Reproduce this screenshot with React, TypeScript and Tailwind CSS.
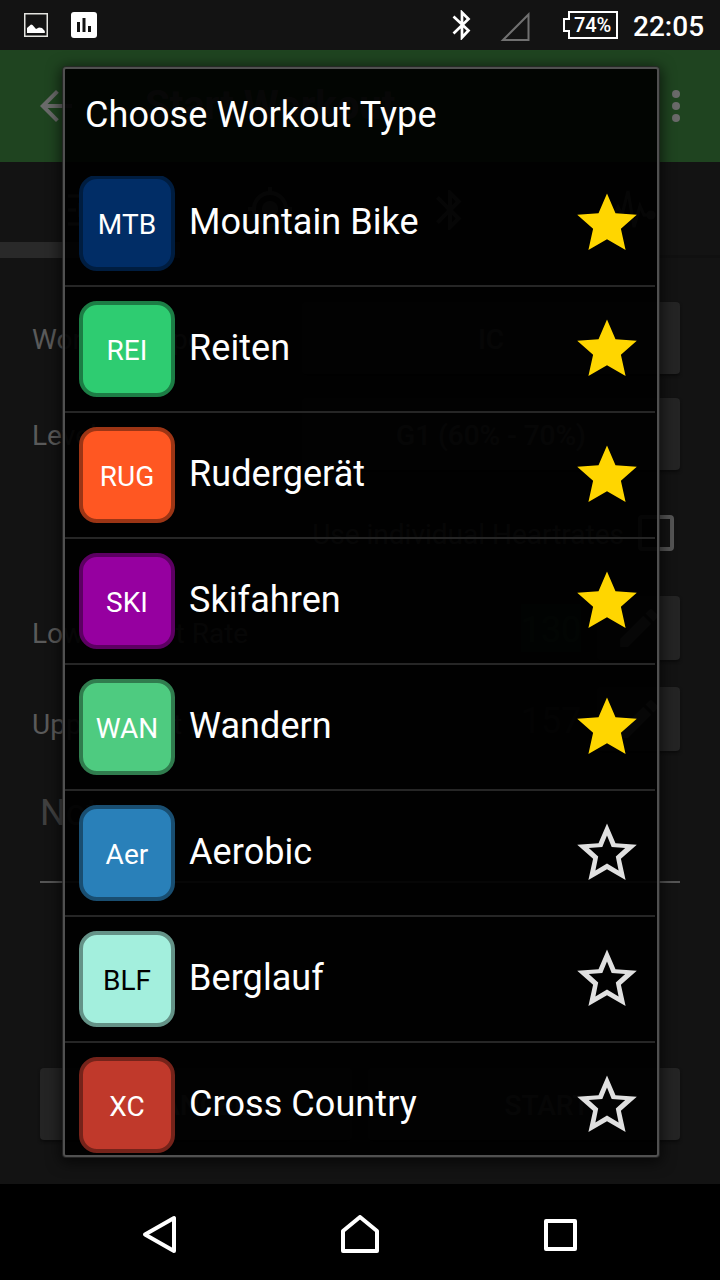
import React from "react";

type Workout = { code: string; name: string; tile: string; favorite: boolean };

const workouts: Workout[] = [
  { code: "MTB", name: "Mountain Bike", tile: "bg-[#012d66] border-[#001d40] text-white", favorite: true },
  { code: "REI", name: "Reiten", tile: "bg-[#2ecc71] border-[#1c7d45] text-white", favorite: true },
  { code: "RUG", name: "Rudergerät", tile: "bg-[#ff5722] border-[#9c3515] text-white", favorite: true },
  { code: "SKI", name: "Skifahren", tile: "bg-[#9600a0] border-[#5c0062] text-white", favorite: true },
  { code: "WAN", name: "Wandern", tile: "bg-[#4ecb80] border-[#307c4e] text-white", favorite: true },
  { code: "Aer", name: "Aerobic", tile: "bg-[#2980b9] border-[#194e71] text-white", favorite: false },
  { code: "BLF", name: "Berglauf", tile: "bg-[#a3efdd] border-[#649287] text-black", favorite: false },
  { code: "XC", name: "Cross Country", tile: "bg-[#c0392b] border-[#75231a] text-white", favorite: false },
];

function Star({ filled }: { filled: boolean }) {
  return (
    <svg className="mb-[2px] h-[60px] w-[62px] shrink-0" viewBox="0 0 62 60">
      {filled ? (
        <path d="M31 1.500 39.500 21.200 60.800 22.700 44.900 36.700 49.600 58 31 47.200 12.400 58 17.100 36.700 1.200 22.700 22.500 21.200Z" fill="#ffd600" />
      ) : (
        <path
          d="M31 1.500 39.500 21.200 60.800 22.700 44.900 36.700 49.600 58 31 47.200 12.400 58 17.100 36.700 1.200 22.700 22.500 21.200ZM31 13.500 26.300 25 12.800 26 22.200 34.500 19.400 48.500 31 41.600 42.600 48.500 39.800 34.500 49.200 26 35.700 25Z"
          fill="#e0e0e0"
          fillRule="evenodd"
        />
      )}
    </svg>
  );
}

function Bluetooth({ className }: { className: string }) {
  return (
    <svg className={className} viewBox="5 2 14 20" fill="currentColor">
      <path d="M17.71 7.71 12 2h-1v7.59L6.41 5 5 6.41 10.59 12 5 17.59 6.41 19 11 14.41V22h1l5.71-5.71-4.3-4.29 4.3-4.29zM13 5.83l1.88 1.88L13 9.59V5.83zm1.88 10.46L13 18.17v-3.76l1.88 1.88z" />
    </svg>
  );
}

function StatusBar() {
  return (
    <div className="flex h-[50px] shrink-0 items-center bg-[#131313] text-white">
      <svg className="ml-6 h-6 w-6" viewBox="0 0 24 24">
        <rect x=".75" y=".75" width="22.5" height="22.5" fill="none" stroke="#e4e4e0" strokeWidth="1.5" />
        <path d="M3 20v-5l4-3.500 1.500.5L12 16l3-1.500 3 .5 2.800 3V20Z" fill="#fff" />
      </svg>
      <svg className="ml-[23px] h-[26px] w-[26px]" viewBox="0 0 26 26">
        <rect width="26" height="26" rx="3" fill="#fff" />
        <path d="M6 10h3v10H6zM11.500 6h3v14h-3zM17 14h3v6h-3z" fill="#131313" />
      </svg>
      <div className="grow" />
      <svg className="h-[30px] w-[19px]" viewBox="0 0 19 30">
        <path d="m1.500 6.500 15 14-6.500 7V2.500l6.500 6.500-15 14.500" fill="none" stroke="#fff" strokeWidth="2.700" />
      </svg>
      <svg className="ml-[29px] mt-[2px] h-[31px] w-[31px]" viewBox="0 0 31 31">
        <path d="M3 29 28.500 3.500V29Z" fill="none" stroke="#707070" strokeWidth="2" />
      </svg>
      <div className="relative ml-[32px] h-[28px] w-[55px]">
        <svg className="h-[28px] w-[55px]" viewBox="0 0 55 28">
          <path d="M6 1h48v26H6v-7H1V8h5Z" fill="none" stroke="#fff" strokeWidth="2" />
        </svg>
        <span className="absolute left-[11px] top-0 text-[20px] font-medium leading-[28px] tracking-[-0.1px]">74%</span>
      </div>
      <span className="ml-[15px] mr-4 mt-1 w-[71px] whitespace-nowrap text-[28px] font-medium leading-8">22:05</span>
    </div>
  );
}

function Pencil() {
  return (
    <svg className="h-[42px] w-[42px]" viewBox="2 2 20 20" fill="#606060">
      <path d="M3 17.250V21h3.750L17.810 9.940l-3.750-3.750L3 17.250zM20.710 7.040a1 1 0 0 0 0-1.410l-2.340-2.340a1 1 0 0 0-1.410 0l-1.830 1.830 3.750 3.750 1.830-1.830z" />
    </svg>
  );
}

function WorkoutForm() {
  const button = "flex items-center justify-center rounded bg-[#242424] font-medium shadow-[0_2px_3px_#0c0c0c]";
  return (
    <div className="flex h-[1134px] shrink-0 flex-col bg-[#131313] text-[28px] text-[#5a5a5a]">
      <header className="flex h-28 shrink-0 items-center bg-[#1f4420] pl-10 pr-[38px] text-[#6a6a6a]">
        <svg className="h-8 w-8" viewBox="4 4 16 16" fill="currentColor">
          <path d="M20 11H7.830l5.590-5.590L12 4l-8 8 8 8 1.410-1.410L7.830 13H20v-2z" />
        </svg>
        <h1 className="ml-[73px] grow text-[40px] font-bold">Start Workout</h1>
        <svg className="h-8 w-3" viewBox="0 0 12 32" fill="currentColor">
          <circle cx="6" cy="4" r="4" />
          <circle cx="6" cy="16" r="4" />
          <circle cx="6" cy="28" r="4" />
        </svg>
      </header>
      <nav className="grid h-24 shrink-0 grid-cols-4 border-b-[3px] border-[#101010]">
        <div className="-mb-[3px] flex items-center justify-center border-b-[16px] border-[#292929]">
          <svg className="mt-4 h-8 w-11" viewBox="0 0 44 32" stroke="currentColor" strokeWidth="3">
            <path d="M0 2h44M0 16h8M16 16h28M0 30h44M12 9v14" />
          </svg>
        </div>
        <div className="flex items-center justify-center">
          <svg className="h-11 w-11" viewBox="1 1 22 22" fill="none" stroke="currentColor" strokeWidth="2">
            <circle cx="12" cy="12" r="8" /><circle cx="12" cy="12" r="4" fill="currentColor" stroke="none" />
            <path d="M12 1v3M12 20v3M1 12h3M20 12h3" />
          </svg>
        </div>
        <div className="flex items-center justify-center pt-[2px]"><Bluetooth className="h-10 w-7" /></div>
        <div className="flex items-center justify-center">
          <svg className="h-10 w-[52px]" viewBox="0 0 52 40" fill="none" stroke="currentColor" strokeWidth="3">
            <path d="M0 26h10l4-8 4 8 6-24 6 36 6-21 4 9h5" /><circle cx="47" cy="26" r="3" fill="currentColor" />
          </svg>
        </div>
      </nav>
      <div className="mt-11 flex h-[72px] shrink-0 items-center pl-8 pr-10">
        <span className="w-[270px] pt-[3px]">Workout Type</span><div className={`${button} h-[72px] grow pt-[3px]`}>IC</div>
      </div>
      <div className="mt-6 flex h-[72px] shrink-0 items-center pl-8 pr-10">
        <span className="w-[270px] pt-[3px]">Level</span><div className={`${button} h-[72px] grow pt-[3px]`}>G1 (60% - 70%)</div>
      </div>
      <div className="mt-[45px] flex h-9 shrink-0 items-center justify-end pr-[46px]">
        <span className="pt-[3px]">Use individual Heartrates</span><span className="ml-[14px] h-9 w-9 rounded border-4 border-[#555]" />
      </div>
      <div className="mt-[45px] flex h-16 shrink-0 items-center pl-8 pr-10">
        <span className="grow pt-3">Lower Heart Rate</span>
        <span className="mr-4 flex h-12 w-[60px] items-center justify-center bg-[#163026] pt-1 text-[36px] text-[#285030]">130</span>
        <div className={`${button} h-16 w-[83px]`}><Pencil /></div>
      </div>
      <div className="mt-[27px] flex h-16 shrink-0 items-center pl-8 pr-10">
        <span className="grow pt-3">Upper Heart Rate</span>
        <span className="mr-4 flex h-12 w-[60px] items-center justify-center pt-1 text-[36px] text-[#303030]">157</span>
        <div className={`${button} h-16 w-[83px]`}><Pencil /></div>
      </div>
      <div className="mx-10 mt-[38px] h-[94px] shrink-0 border-b-2 border-[#555] text-[36px] leading-[48px] text-[#404040]">Note</div>
      <div className="mx-10 mt-[185px] grid h-[72px] shrink-0 grid-cols-2 gap-4">
        <div className={`${button} pt-[3px]`}>CANCEL</div><div className={`${button} pl-[46px] pt-[3px]`}>START</div>
      </div>
    </div>
  );
}

function WorkoutDialog() {
  return (
    <div className="absolute left-[63px] top-[67px] flex h-[1090px] w-[596px] flex-col overflow-hidden rounded-[3px] border-2 border-[#505050] bg-black/93 text-[36px] tracking-[0.07px] text-white shadow-[0_0_0_1px_rgba(40,40,40,0.8),0_3px_14px_3px_rgba(0,0,0,0.6)]">
      <h2 className="h-[107px] shrink-0 pl-5 pt-[25px] leading-[42px]">Choose Workout Type</h2>
      <ul className="mr-[2px] flex min-h-0 grow flex-col overflow-hidden">
        {workouts.map((w) => (
          <li key={w.code} className="flex h-[126px] shrink-0 items-center border-b-2 border-[#262626] pl-[14px] pr-[17px] first:-mt-[15px]">
            <span className={`flex h-24 w-24 shrink-0 items-center justify-center rounded-[18px] border-4 pt-1 text-[28px] ${w.tile}`}>
              {w.code}
            </span>
            <span className="ml-[14px] grow pb-[3px] leading-[42px]">{w.name}</span>
            <Star filled={w.favorite} />
          </li>
        ))}
      </ul>
    </div>
  );
}

function NavigationBar() {
  return (
    <div className="flex h-24 shrink-0 items-center bg-black pl-[142px] pr-[142px] pt-[6px]">
      <svg className="h-10 w-9" viewBox="0 0 36 40" fill="none" stroke="#fff" strokeWidth="4" strokeLinejoin="round">
        <path d="M3 19.500 32 3v33Z" />
      </svg>
      <div className="flex grow justify-center pr-[2px]">
        <svg className="h-10 w-10" viewBox="0 0 40 40" fill="none" stroke="#fff" strokeWidth="4" strokeLinejoin="round">
          <path d="M3 36V16L20 2l17 14v20Z" />
        </svg>
      </div>
      <svg className="h-[33px] w-[34px]" viewBox="0 0 34 33" fill="none" stroke="#fff" strokeWidth="4" strokeLinejoin="round">
        <path d="M2 2h29v28H2Z" />
      </svg>
    </div>
  );
}

export default function App() {
  return (
    <main className="relative flex h-[1280px] w-[720px] flex-col overflow-hidden bg-black font-['Roboto',sans-serif]">
      <StatusBar />
      <WorkoutForm />
      <NavigationBar />
      <WorkoutDialog />
    </main>
  );
}
